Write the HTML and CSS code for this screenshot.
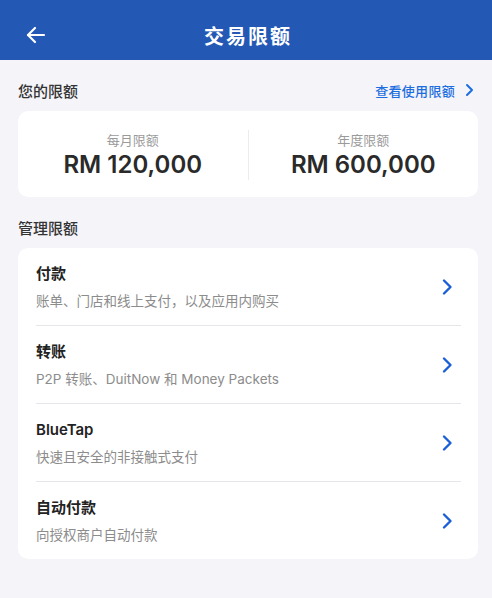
FILE: index.html
```html
<!DOCTYPE html>
<html>
<head>
  <meta charset="UTF-8">
  <meta name="viewport" content="width=device-width, initial-scale=1.0">
  <title>交易限额</title>
  <link rel="stylesheet" href="styles.css">
</head>
<body>
  <div class="top-bar">
    <span class="back-btn">
      <svg width="20" height="18" viewBox="0 0 20 18" fill="none" stroke="#fff" stroke-width="2.2" stroke-linecap="round" stroke-linejoin="round">
        <path d="M18 9H2"/>
        <path d="M9 2L2 9l7 7"/>
      </svg>
    </span>
    <h1 class="top-title">交易限额</h1>
  </div>

  <div class="page">
    <div class="section-head">
      <h2 class="section-title">您的限额</h2>
      <a class="view-link">查看使用限额
        <svg width="9" height="14" viewBox="0 0 9 14" fill="none" stroke="currentColor" stroke-width="2" stroke-linecap="round" stroke-linejoin="round"><path d="M2 2l5 5-5 5"/></svg>
      </a>
    </div>

    <div class="card limit-card">
      <div class="limit-item">
        <p class="limit-label">每月限额</p>
        <p class="limit-amount">RM 120,000</p>
      </div>
      <div class="limit-sep"></div>
      <div class="limit-item">
        <p class="limit-label">年度限额</p>
        <p class="limit-amount">RM 600,000</p>
      </div>
    </div>

    <div class="section-head">
      <h2 class="section-title">管理限额</h2>
    </div>

    <div class="card manage-card">
      <div class="manage-row">
        <div class="manage-text">
          <p class="manage-title">付款</p>
          <p class="manage-sub">账单、门店和线上支付，以及应用内购买</p>
        </div>
        <svg class="chevron" width="12" height="18" viewBox="0 0 12 18" fill="none" stroke="currentColor" stroke-width="2.4" stroke-linecap="round" stroke-linejoin="round"><path d="M3 2.5l6.5 6.5L3 15.5"/></svg>
      </div>
      <div class="manage-row">
        <div class="manage-text">
          <p class="manage-title">转账</p>
          <p class="manage-sub">P2P 转账、DuitNow 和 Money Packets</p>
        </div>
        <svg class="chevron" width="12" height="18" viewBox="0 0 12 18" fill="none" stroke="currentColor" stroke-width="2.4" stroke-linecap="round" stroke-linejoin="round"><path d="M3 2.5l6.5 6.5L3 15.5"/></svg>
      </div>
      <div class="manage-row">
        <div class="manage-text">
          <p class="manage-title">BlueTap</p>
          <p class="manage-sub">快速且安全的非接触式支付</p>
        </div>
        <svg class="chevron" width="12" height="18" viewBox="0 0 12 18" fill="none" stroke="currentColor" stroke-width="2.4" stroke-linecap="round" stroke-linejoin="round"><path d="M3 2.5l6.5 6.5L3 15.5"/></svg>
      </div>
      <div class="manage-row">
        <div class="manage-text">
          <p class="manage-title">自动付款</p>
          <p class="manage-sub">向授权商户自动付款</p>
        </div>
        <svg class="chevron" width="12" height="18" viewBox="0 0 12 18" fill="none" stroke="currentColor" stroke-width="2.4" stroke-linecap="round" stroke-linejoin="round"><path d="M3 2.5l6.5 6.5L3 15.5"/></svg>
      </div>
    </div>
  </div>
</body>
</html>
```

FILE: styles.css
```css
body {
  margin: 0;
  padding: 0;
  font-family: Inter, "Noto Sans CJK SC", sans-serif;
  background: #f4f4f9;
  color: #222;
}

p, h1, h2 {
  margin: 0;
}

.top-bar {
  height: 60px;
  background: #2359b5;
  display: flex;
  align-items: center;
  justify-content: center;
  position: relative;
  padding-top: 10px;
  box-sizing: border-box;
}

.back-btn {
  position: absolute;
  left: 26px;
  top: 26px;
  display: flex;
}

.top-title {
  color: #fff;
  font-size: 20px;
  font-weight: 700;
  letter-spacing: 2px;
  padding-left: 4px;
}

.page {
  padding: 0 14px 0 18px;
}

.section-head {
  display: flex;
  justify-content: space-between;
  align-items: center;
  height: 20px;
  padding: 20px 0 11px;
}

.section-title {
  font-size: 15px;
  font-weight: 500;
  color: #333;
}

.view-link {
  display: flex;
  align-items: center;
  gap: 10px;
  font-size: 13px;
  font-weight: 500;
  letter-spacing: 0.3px;
  color: #1c6ee0;
  padding-right: 4px;
}

.card {
  background: #fff;
  border-radius: 10px;
}

.limit-card {
  display: flex;
  align-items: center;
  padding: 19px 0 17px;
}

.limit-item {
  flex: 1;
  text-align: center;
}

.limit-sep {
  width: 1px;
  height: 50px;
  background: #ececf0;
}

.limit-label {
  font-size: 13px;
  line-height: 19px;
  color: #9a9a9a;
}

.limit-amount {
  font-size: 24px;
  line-height: 30px;
  font-weight: 600;
  color: #2a2a2a;
}

.manage-card {
  padding: 0 17px 0 18px;
}

.manage-row {
  display: flex;
  align-items: center;
  justify-content: space-between;
  padding: 16px 8px 15px 0;
  border-bottom: 1px solid #e6e6ea;
}

.manage-row:last-child {
  border-bottom: none;
}

.manage-title {
  font-size: 15px;
  line-height: 20px;
  font-weight: 600;
  color: #222;
}

.manage-sub {
  margin-top: 8px;
  font-size: 13.5px;
  line-height: 18px;
  color: #8c8c8c;
}

.chevron {
  color: #1a5fd8;
}
```
